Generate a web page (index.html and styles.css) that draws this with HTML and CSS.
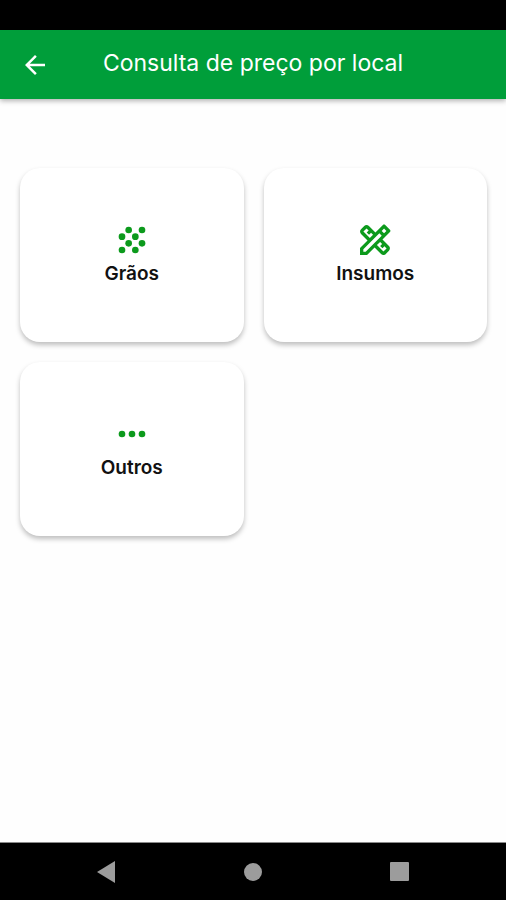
FILE: index.html
```html
<!DOCTYPE html>
<html lang="pt-BR">
<head>
    <meta charset="UTF-8">
    <meta name="viewport" content="width=device-width, initial-scale=1.0">
    <title>Consulta de preço por local</title>
    <link rel="stylesheet" href="styles.css">
</head>
<body>
    <div class="status-bar"></div>
    <header class="app-bar">
        <a class="back" href="#" aria-label="Voltar">
            <svg viewBox="0 0 24 24" width="30" height="30"><path d="M20 11H7.83l5.59-5.59L12 4l-8 8 8 8 1.41-1.41L7.83 13H20v-2z"/></svg>
        </a>
        <h1>Consulta de preço por local</h1>
    </header>

    <main class="menu">
        <button type="button" class="card">
            <svg viewBox="0 0 24 24" width="40" height="40" aria-hidden="true">
                <circle cx="10" cy="6" r="2"/>
                <circle cx="18" cy="6" r="2"/>
                <circle cx="6" cy="10" r="2"/>
                <circle cx="14" cy="10" r="2"/>
                <circle cx="10" cy="14" r="2"/>
                <circle cx="18" cy="14" r="2"/>
                <circle cx="6" cy="18" r="2"/>
                <circle cx="14" cy="18" r="2"/>
            </svg>
            <span>Grãos</span>
        </button>
        <button type="button" class="card">
            <svg viewBox="0 0 24 24" width="40" height="40" aria-hidden="true">
                <path d="M20.97 7.27c.39-.39.39-1.02 0-1.41l-2.83-2.83c-.39-.39-1.02-.39-1.41 0l-4.49 4.49-3.89-3.89c-.78-.78-2.05-.78-2.83 0l-1.9 1.9c-.78.78-.78 2.05 0 2.83l3.89 3.89L3 16.76V21h4.24l4.52-4.52 3.89 3.89c.95.95 2.23.6 2.83 0l1.9-1.9c.78-.78.78-2.05 0-2.83l-3.89-3.89 4.48-4.48zM5.04 6.94l1.89-1.9L8.2 6.31 7.02 7.5l1.41 1.41 1.19-1.19 1.2 1.2-1.9 1.9-3.88-3.88zm11.23 7.44l-1.19 1.19 1.41 1.41 1.19-1.19 1.27 1.27-1.9 1.9-3.89-3.89 1.9-1.9 1.21 1.21zM6.41 19H5v-1.41l9.61-9.61 1.3 1.3.11.11L6.41 19zm11.02-11.02l-1.41-1.41 1.41-1.41 1.41 1.41-1.41 1.41z"/>
            </svg>
            <span>Insumos</span>
        </button>
        <button type="button" class="card">
            <svg viewBox="0 0 24 24" width="40" height="40" aria-hidden="true">
                <circle cx="6" cy="12" r="2"/>
                <circle cx="12" cy="12" r="2"/>
                <circle cx="18" cy="12" r="2"/>
            </svg>
            <span>Outros</span>
        </button>
    </main>

    <nav class="system-nav">
        <button type="button" aria-label="Voltar">
            <svg viewBox="0 0 22 22" width="22" height="22"><path d="M2 11L20 0v22z"/></svg>
        </button>
        <button type="button" aria-label="Início">
            <svg viewBox="0 0 22 22" width="22" height="22"><circle cx="11" cy="11" r="9"/></svg>
        </button>
        <button type="button" aria-label="Recentes">
            <svg viewBox="0 0 22 22" width="22" height="22"><rect x="1" y="1" width="19" height="19" rx="1"/></svg>
        </button>
    </nav>
</body>
</html>
```

FILE: styles.css
```css
body {
    font-family: Inter, "Open Sans", sans-serif;
    background-color: #fefefe;
    display: flex;
    flex-direction: column;
    min-height: 100vh;
    margin: 0;
}
button {
    font-family: inherit;
    border: none;
    cursor: pointer;
}
svg {
    display: block;
    fill: currentColor;
}
.status-bar {
    height: 30px;
    background-color: #000;
}
.app-bar {
    display: grid;
    grid-template-columns: 30px 1fr 30px;
    align-items: center;
    height: 69px;
    padding: 0 20px;
    background-color: #009e3a;
    color: white;
    box-shadow: 0 2px 5px rgba(0, 0, 0, 0.3);
}
.back {
    color: white;
}
h1 {
    margin: 0;
    padding-bottom: 3px;
    font-size: 23px;
    font-weight: 400;
    line-height: 32px;
    text-align: center;
}
.menu {
    flex: 1;
    display: grid;
    grid-template-columns: 1fr 1fr;
    grid-auto-rows: 174px;
    gap: 20px;
    padding: 69px 19px 20px 20px;
}
.card {
    display: flex;
    flex-direction: column;
    align-items: center;
    justify-content: center;
    padding: 0 0 2px;
    border-radius: 20px;
    background-color: white;
    color: #0c9a1c;
    box-shadow: 0 3px 5px rgba(0, 0, 0, 0.25);
}
.card span {
    color: #111;
    font-size: 19px;
    font-weight: 600;
    line-height: 28px;
}
.system-nav {
    display: flex;
    height: 57px;
    padding: 0 33px;
    border-top: 1px solid #8a8a8a;
    background-color: #000;
}
.system-nav button {
    flex: 1;
    display: flex;
    align-items: center;
    justify-content: center;
    padding: 0;
    background: none;
    color: #9c9c9c;
}
```
